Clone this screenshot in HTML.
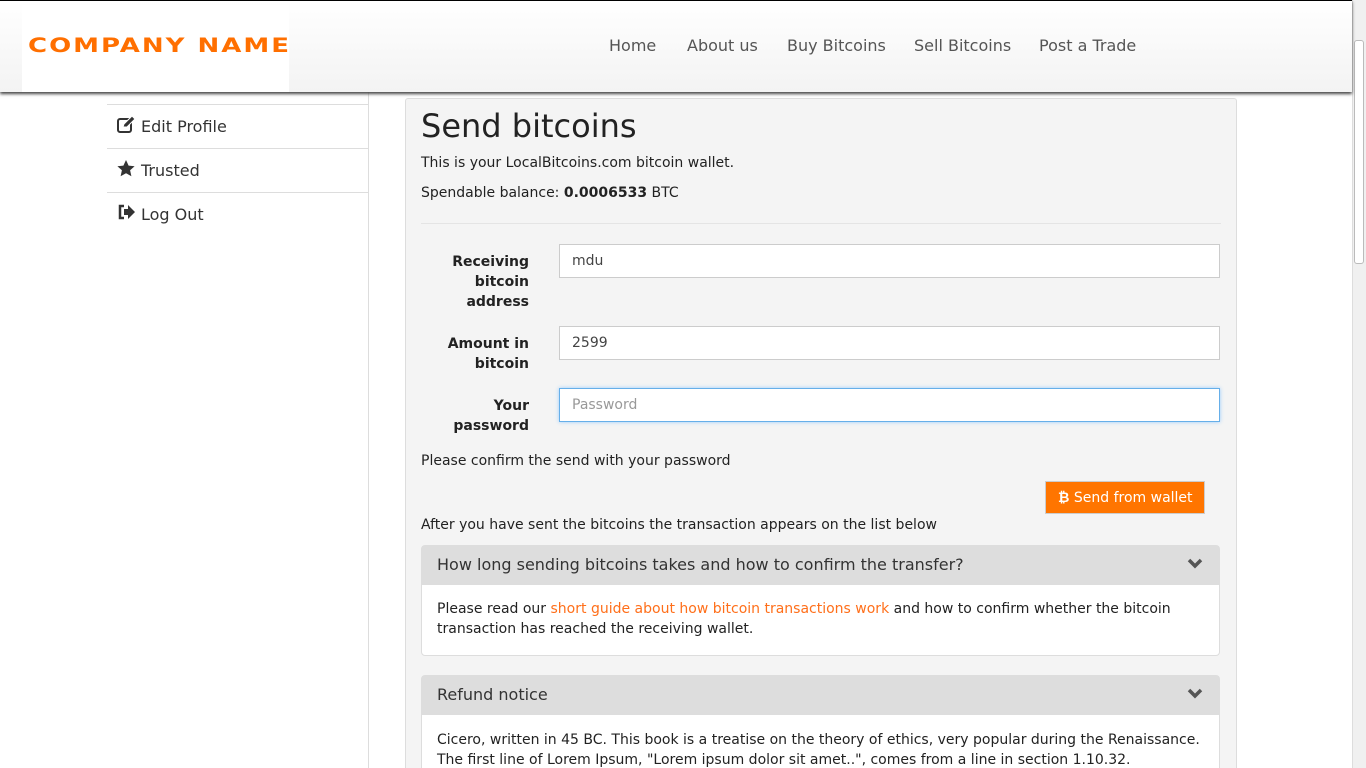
<!DOCTYPE html>
<html><head><meta charset="utf-8"><style>
*{box-sizing:border-box;margin:0;padding:0}
html{width:1366px;height:768px;overflow:hidden}
body{width:1366px;height:768px;overflow:hidden;background:#fff;font-family:"DejaVu Sans","Liberation Sans",sans-serif;color:#222;position:relative;font-size:14px}
.hdr{position:absolute;left:0;top:0;width:1352px;height:92px;background:linear-gradient(#fff,#f3f3f3);border-top:1px solid #000;box-shadow:0 2px 3px #444;z-index:2}
.logo{position:absolute;left:22px;top:4px;width:267px;height:87px;background:#fff}
.logo span{position:absolute;left:6px;top:26px;color:#ff6f00;font:bold 26px "DejaVu Sans",sans-serif;letter-spacing:2px;transform:scaleY(.75);text-transform:uppercase;white-space:nowrap}
.nav{position:absolute;top:35px;font-size:16px;color:#555}
.vline{position:absolute;left:368px;top:92px;width:1px;height:676px;background:#ddd}
.item{position:absolute;left:107px;width:261px;height:44px;border-top:1px solid #ddd;font-size:16px;padding:12px 0 0 34px;color:#333}
.ico{position:absolute;left:10px;top:11px}
.scroll{position:absolute;left:1352px;top:0;width:14px;height:768px;background:#f0f0f0;border-left:1px solid #ddd}
.thumb{position:absolute;left:1354px;top:40px;width:10px;height:224px;background:#fff;border:1px solid #bbb;border-radius:3px}
.panel{position:absolute;left:405px;top:98px;width:832px;height:670px;background:#f4f4f4;border:1px solid #ddd;border-bottom:none;border-radius:3px 3px 0 0;overflow:hidden}
.t{position:absolute;white-space:nowrap}
.lbl{position:absolute;right:707px;text-align:right;font-weight:bold;font-size:14px;line-height:20px}
.inp{position:absolute;left:153px;width:661px;height:34px;background:#fff;border:1px solid #ccc;font-size:14px;padding:8px 12px;color:#444}
.btn{position:absolute;left:639px;top:382px;width:160px;height:33px;background:#ff7500;border:1px solid #ccc;color:#fff;font-size:14px;padding:7px 0 0 12px}
.acc{position:absolute;left:15px;width:799px;background:#fff;border:1px solid #ddd;border-radius:4px}
.acch{height:39px;background:#ddd;font-size:16px;padding:9px 15px;color:#333;position:relative}
.chev{position:absolute;right:16px;top:12px}
.accb{padding:14px 15px;line-height:20px;font-size:14px}
</style></head><body>
<div class="hdr">
<div class="logo"><span>company name</span></div>
<div class="nav" style="left:609px">Home</div>
<div class="nav" style="left:687px">About us</div>
<div class="nav" style="left:787px">Buy Bitcoins</div>
<div class="nav" style="left:914px">Sell Bitcoins</div>
<div class="nav" style="left:1039px">Post a Trade</div>
</div>
<div class="vline"></div>
<div class="item" style="top:104px"><svg class="ico" width="19" height="17" viewBox="0 0 19 17"><rect x="1" y="3" width="13" height="13" rx="2" fill="none" stroke="#333" stroke-width="2"/><path d="M6 11l1-3 8-8 3 3-8 8z" fill="#333" stroke="#fff" stroke-width="1"/></svg>Edit Profile</div>
<div class="item" style="top:148px"><svg class="ico" width="18" height="17" viewBox="0 0 18 17"><path d="M9 0l2.6 5.6 6 .6-4.5 4 1.3 6L9 13.2 3.6 16.2l1.3-6-4.5-4 6-.6z" fill="#333"/></svg>Trusted</div>
<div class="item" style="top:192px"><svg class="ico" width="18" height="16" viewBox="0 0 18 16"><path d="M7 2H3v12h4" fill="none" stroke="#333" stroke-width="2.5"/><path d="M7 5h4V1l7 7-7 7v-4H7z" fill="#333"/></svg>Log Out</div>
<div class="panel">
<div class="t" style="left:15px;top:8px;font-size:32px;color:#222">Send bitcoins</div>
<div class="t" style="left:15px;top:56px">This is your LocalBitcoins.com bitcoin wallet.</div>
<div class="t" style="left:15px;top:86px">Spendable balance: <b>0.0006533</b> BTC</div>
<div style="position:absolute;left:15px;top:124px;width:800px;height:1px;background:#e4e4e4"></div>
<div class="lbl" style="top:153px">Receiving<br>bitcoin<br>address</div>
<div class="inp" style="top:145px">mdu</div>
<div class="lbl" style="top:235px">Amount in<br>bitcoin</div>
<div class="inp" style="top:227px">2599</div>
<div class="lbl" style="top:297px">Your<br>password</div>
<div class="inp" style="top:289px;border-color:#66afe9;box-shadow:0 0 4px #9cf;color:#999">Password</div>
<div class="t" style="left:15px;top:354px">Please confirm the send with your password</div>
<div class="btn"><b>₿</b> Send from wallet</div>
<div class="t" style="left:15px;top:418px">After you have sent the bitcoins the transaction appears on the list below</div>
<div class="acc" style="top:446px"><div class="acch">How long sending bitcoins takes and how to confirm the transfer?<svg class="chev" width="16" height="11" viewBox="0 0 16 11"><path d="M2 2l6 6 6-6" fill="none" stroke="#555" stroke-width="3.5"/></svg></div>
<div class="accb" style="height:70px">Please read our <span style="color:#ff6f1a">short guide about how bitcoin transactions work</span> and how to confirm whether the bitcoin transaction has reached the receiving wallet.</div></div>
<div class="acc" style="top:576px"><div class="acch">Refund notice<svg class="chev" width="16" height="11" viewBox="0 0 16 11"><path d="M2 2l6 6 6-6" fill="none" stroke="#555" stroke-width="3.5"/></svg></div>
<div class="accb" style="padding-top:15px">Cicero, written in 45 BC. This book is a treatise on the theory of ethics, very popular during the Renaissance. The first line of Lorem Ipsum, "Lorem ipsum dolor sit amet..", comes from a line in section 1.10.32.</div></div>
</div>
<div class="scroll"></div><div class="thumb"></div>
</body></html>
